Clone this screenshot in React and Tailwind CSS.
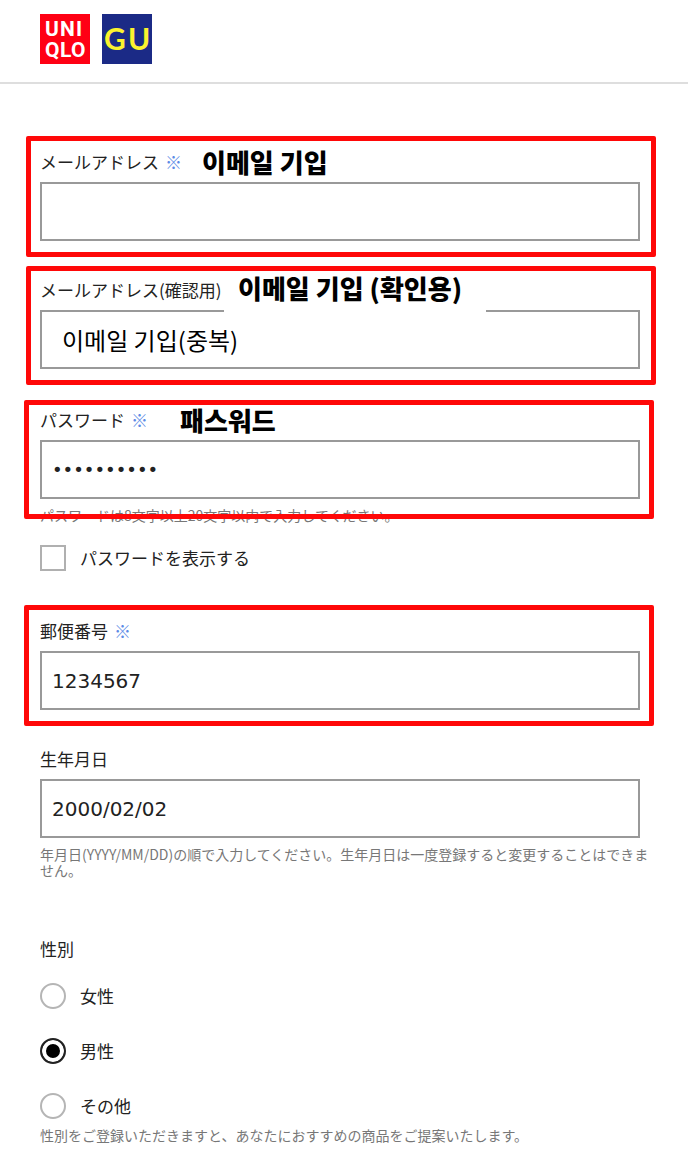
import React from "react";

const noteText = 'font-["Noto_Sans_CJK_KR",sans-serif] text-[26px] leading-8 font-black text-black whitespace-nowrap';

function Logos() {
  return (
    <div className="flex gap-3">
      <a href="#uniqlo" aria-label="UNIQLO">
        <svg viewBox="0 0 50 50" className="size-[50px]">
          <rect width="50" height="50" fill="#ff0014" />
          <g fill="#fff" className='font-["Roboto",sans-serif] font-bold' fontSize="21">
            <text x="5" y="22">U</text>
            <text x="20" y="22">N</text>
            <text x="36" y="22">I</text>
            <text x="5" y="43">Q</text>
            <text x="20" y="43">L</text>
            <text x="31" y="43">O</text>
          </g>
        </svg>
      </a>
      <a href="#gu" aria-label="GU">
        <svg viewBox="0 0 50 50" className="size-[50px]">
          <rect width="50" height="50" fill="#1b2a86" />
          <g fill="#fbf22e" className='font-["Lato",sans-serif] font-bold' fontSize="30">
            <text x="2" y="36">G</text>
            <text x="26" y="36">U</text>
          </g>
        </svg>
      </a>
    </div>
  );
}

function Frame({ className }) {
  return (
    <div
      aria-hidden="true"
      className={"pointer-events-none absolute rounded-xs border-5 border-[#ff0808] " + className}
    />
  );
}

function Field({ id, label, required, note, noteClass = "", frame, hint, inputClass = "", ...input }) {
  return (
    <div className="relative">
      <div className="flex h-6 items-center">
        <label htmlFor={id} className="whitespace-nowrap">
          {label}
          {required && <span className="ml-1.5 text-[#5b8ae6]">※</span>}
        </label>
        {note && <span className={noteText + " " + noteClass}>{note}</span>}
      </div>
      <input
        id={id}
        className={
          'mt-2 block h-[59px] w-full border-2 border-[#999] bg-white px-2.5 font-["DejaVu_Sans",sans-serif] text-[#222] outline-none ' +
          inputClass
        }
        {...input}
      />
      {hint && <p className="mt-2 -mr-3 text-sm leading-4 text-[#777]">{hint}</p>}
      {frame && <Frame className={frame} />}
    </div>
  );
}

function Radio({ label, ...props }) {
  return (
    <label className="flex h-[26px] items-center gap-3.5">
      <input
        type="radio"
        name="gender"
        className="size-[26px] appearance-none rounded-full border-2 border-[#b5b5b5] bg-white checked:border-[#222] checked:bg-black checked:shadow-[inset_0_0_0_4px_white]"
        {...props}
      />
      {label}
    </label>
  );
}

export default function App() {
  return (
    <div className='bg-white font-["Noto_Sans_CJK_JP",sans-serif] text-[17px] leading-6 text-[#222]'>
      <header className="border-b-2 border-[#dedede] pt-3.5 pb-[18px] pl-10">
        <Logos />
      </header>
      <form className="flex flex-col pt-[66px] pr-12 pb-5 pl-10">
        <Field
          id="email"
          type="email"
          label="メールアドレス"
          required
          note="이메일 기입"
          noteClass="ml-5"
          frame="-top-3.5 -right-4 -bottom-4 -left-3.5"
          inputClass="text-xl"
        />
        <div className="mt-[37px]">
          <Field
            id="email-confirm"
            type="text"
            label="メールアドレス(確認用)"
            required
            note="이메일 기입 (확인용)"
            noteClass="absolute -top-1.5 left-46 z-10 h-10 w-[262px] bg-white pl-3.5"
            frame="-top-3 -right-4 -bottom-4 -left-3.5"
            inputClass='pl-5 font-["Noto_Sans_CJK_KR",sans-serif] text-2xl text-black'
            defaultValue="이메일 기입(중복)"
          />
        </div>
        <div className="mt-[39px]">
          <Field
            id="password"
            type="password"
            label="パスワード"
            required
            note="패스워드"
            noteClass="ml-8"
            frame="-top-2 -right-3.5 bottom-1 -left-4"
            inputClass="text-lg"
            defaultValue="password12"
            hint="パスワードは8文字以上20文字以内で入力してください。"
          />
        </div>
        <label className="mt-[22px] flex h-[26px] items-center gap-3.5">
          <input type="checkbox" className="size-[26px] appearance-none border-2 border-[#b0b0b0] bg-white checked:bg-black" />
          パスワードを表示する
        </label>
        <div className="mt-12">
          <Field
            id="postal"
            type="text"
            label="郵便番号"
            required
            frame="-top-3.5 -right-3.5 -bottom-4 -left-4"
            inputClass="text-xl"
            defaultValue="1234567"
          />
        </div>
        <div className="mt-[37px]">
          <Field
            id="birthday"
            type="text"
            label="生年月日"
            inputClass="text-xl"
            defaultValue="2000/02/02"
            hint="年月日(YYYY/MM/DD)の順で入力してください。生年月日は一度登録すると変更することはできません。"
          />
        </div>
        <fieldset className="mt-[59px]">
          <legend>性別</legend>
          <div className="flex flex-col gap-[29px] pt-[22px]">
            <Radio label="女性" value="female" />
            <Radio label="男性" value="male" defaultChecked />
            <Radio label="その他" value="other" />
          </div>
          <p className="mt-2 text-sm leading-4 text-[#777]">
            性別をご登録いただきますと、あなたにおすすめの商品をご提案いたします。
          </p>
        </fieldset>
      </form>
    </div>
  );
}
